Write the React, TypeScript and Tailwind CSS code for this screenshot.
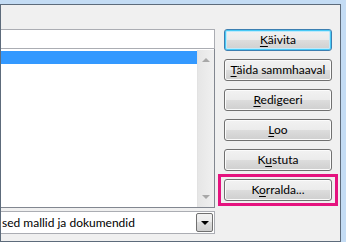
import React from 'react';

const font = 'font-["Lato","Noto_Sans",sans-serif]';

const btnBase =
  'w-[108px] h-[22px] rounded-[3px] border text-[12px] leading-none text-black flex items-center justify-center';
const btnGray =
  'border-[#707070] bg-[linear-gradient(#f2f2f2_0%,#ebebeb_50%,#dddddd_50%,#cfcfcf_100%)] shadow-[inset_0_0_0_1px_#fbfbfb]';
const btnDefault =
  'border-[#3c7fb1] bg-[linear-gradient(#f2f2f2_0%,#ebebeb_50%,#dddddd_50%,#cfcfcf_100%)] shadow-[inset_0_0_0_1px_#48c9f5,inset_0_0_0_2px_#bfeafb]';

const Btn: React.FC<{ pre?: string; mn: string; post: string; isDefault?: boolean }> = ({
  pre = '',
  mn,
  post,
  isDefault,
}) => (
  <button className={`${btnBase} ${isDefault ? btnDefault : btnGray}`}>
    <span>
      {pre}
      <span className="underline underline-offset-2">{mn}</span>
      {post}
    </span>
  </button>
);

export default function App() {
  return (
    <div className={`w-[346px] h-[242px] bg-[#c4dcf4] pt-[4px] ${font}`}>
      <div className="w-[341px] h-[238px] border border-[#5d6b7b] bg-[#f0f0f0] flex pt-[24px]">
        {/* left column */}
        <div className="w-[214px] flex flex-col">
          {/* text box */}
          <div className="h-[20px] bg-white border-y border-r border-[#abadb3]" />

          {/* list */}
          <div className="h-[159px] bg-white border-b border-r border-[#828790] flex pt-[1px]">
            <div className="flex-1 pt-[1px]">
              <div className="h-[13px] bg-[#3399ff]" />
            </div>
            <div className="w-[17px] bg-[linear-gradient(90deg,#e6e6e6,#f0f0f0)] border-l border-[#e2e2e2] flex flex-col justify-between items-center py-[8px]">
              <div className="w-0 h-0 border-x-[4px] border-x-transparent border-b-[4px] border-b-[#a8a8a8]" />
              <div className="w-0 h-0 border-x-[4px] border-x-transparent border-t-[4px] border-t-[#a8a8a8]" />
            </div>
          </div>

          {/* combo */}
          <div className="mt-[3px] h-[23px] bg-white border-y border-r border-[#abadb3] flex items-center">
            <span className="flex-1 text-[12px] text-black pl-[1px] whitespace-nowrap overflow-hidden">
              sed mallid ja dokumendid
            </span>
            <div className="w-[17px] h-[19px] mr-[1px] rounded-[2px] border border-[#707070] bg-[linear-gradient(#f2f2f2_0%,#ebebeb_50%,#dddddd_50%,#cfcfcf_100%)] flex items-center justify-center">
              <div className="w-0 h-0 border-x-[4px] border-x-transparent border-t-[4px] border-t-black" />
            </div>
          </div>
        </div>

        {/* buttons */}
        <div className="ml-[9px] flex flex-col gap-[8px]">
          <Btn mn="K" post="äivita" isDefault />
          <Btn mn="T" post="äida sammhaaval" />
          <Btn mn="R" post="edigeeri" />
          <Btn mn="L" post="oo" />
          <Btn pre="K" mn="u" post="stuta" />
          <div className="-mt-[5px] -mx-[6px] border-[3px] border-[#e5137f] px-[3px] py-[2px]">
            <Btn pre="K" mn="o" post="rralda..." />
          </div>
        </div>
      </div>
    </div>
  );
}
